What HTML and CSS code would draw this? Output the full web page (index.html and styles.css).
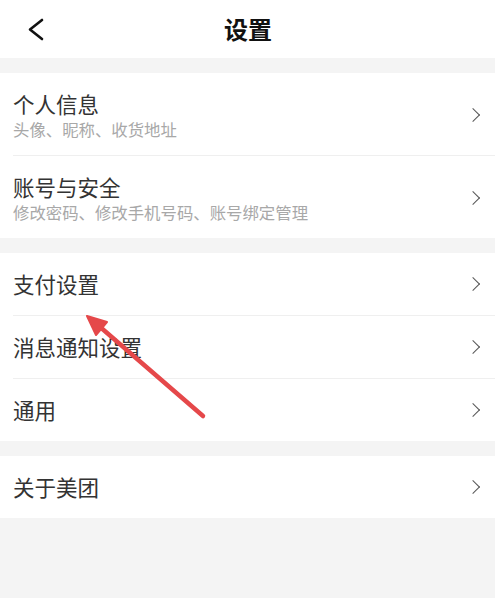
FILE: index.html
```html
<!DOCTYPE html>
<html lang="zh-CN">
<head>
    <meta charset="utf-8">
    <title>设置</title>
<link rel="stylesheet" href="styles.css">
</head>
<body>
    <div id="page">
        <div id="header">
            <svg class="back" width="20" height="24" viewBox="0 0 20 24">
                <polyline points="16,3 4,12.5 16,22" fill="none" stroke="#111" stroke-width="2.6" stroke-linecap="round" stroke-linejoin="round"/>
            </svg>
            <h1 id="title">设置</h1>
        </div>

        <div class="group">
            <div class="row tall">
                <div class="text">
                    <p class="name">个人信息</p>
                    <p class="desc">头像、昵称、收货地址</p>
                </div>
                <span class="more"></span>
            </div>
            <div class="row tall">
                <div class="text">
                    <p class="name">账号与安全</p>
                    <p class="desc">修改密码、修改手机号码、账号绑定管理</p>
                </div>
                <span class="more"></span>
            </div>
        </div>

        <div class="group">
            <div class="row">
                <div class="text"><p class="name">支付设置</p></div>
                <span class="more"></span>
            </div>
            <div class="row">
                <div class="text"><p class="name">消息通知设置</p></div>
                <span class="more"></span>
            </div>
            <div class="row">
                <div class="text"><p class="name">通用</p></div>
                <span class="more"></span>
            </div>
        </div>

        <div class="group">
            <div class="row">
                <div class="text"><p class="name">关于美团</p></div>
                <span class="more"></span>
            </div>
        </div>

        <!-- red arrow drawn over the list -->
        <svg id="arrow" width="500" height="598" viewBox="0 0 500 598">
            <line x1="203" y1="416" x2="99" y2="326" stroke="#e5484a" stroke-width="4.5" stroke-linecap="round"/>
            <polygon points="87,316 107,322 96,335" fill="#e5484a" stroke="#e5484a" stroke-width="2" stroke-linejoin="round"/>
        </svg>
    </div>
</body>
</html>
```

FILE: styles.css
```css
body{
    margin: 0;
    background-color: #fff;
    font-family: 'Noto Sans CJK SC', 'Noto Sans', sans-serif;
}
#page{
    position: relative;
    width: 495px;
    height: 598px;
    background-color: #f4f4f4;
    overflow: hidden;
}
#header{
    position: relative;
    height: 58px;
    background-color: #fff;
    display: flex;
    align-items: center;
    justify-content: center;
    margin-bottom: 15px;
}
.back{
    position: absolute;
    left: 26px;
    top: 17px;
}
#title{
    margin: 0;
    font-size: 24px;
    font-weight: bold;
    color: #111;
    line-height: 30px;
    padding-left: 1px;
}
.group{
    background-color: #fff;
    margin-bottom: 15px;
}
.row{
    height: 62px;
    margin-left: 13px;
    padding-right: 13px;
    display: flex;
    align-items: center;
    border-top: 1px solid #efefef;
}
.row:first-child{
    border-top: 0;
}
.row.tall{
    height: 80px;
    padding-top: 2px;
}
.text{
    flex: 1;
}
.name{
    margin: 0;
    font-size: 21.5px;
    line-height: 28px;
    color: #333;
}
.desc{
    margin: 0;
    font-size: 16.4px;
    line-height: 22px;
    color: #a8a8a8;
}
.more{
    width: 9px;
    height: 9px;
    border-top: 1.6px solid #555;
    border-right: 1.6px solid #555;
    transform: rotate(45deg);
    margin-right: 4px;
}
#arrow{
    position: absolute;
    left: 0;
    top: 0;
    pointer-events: none;
}
```
